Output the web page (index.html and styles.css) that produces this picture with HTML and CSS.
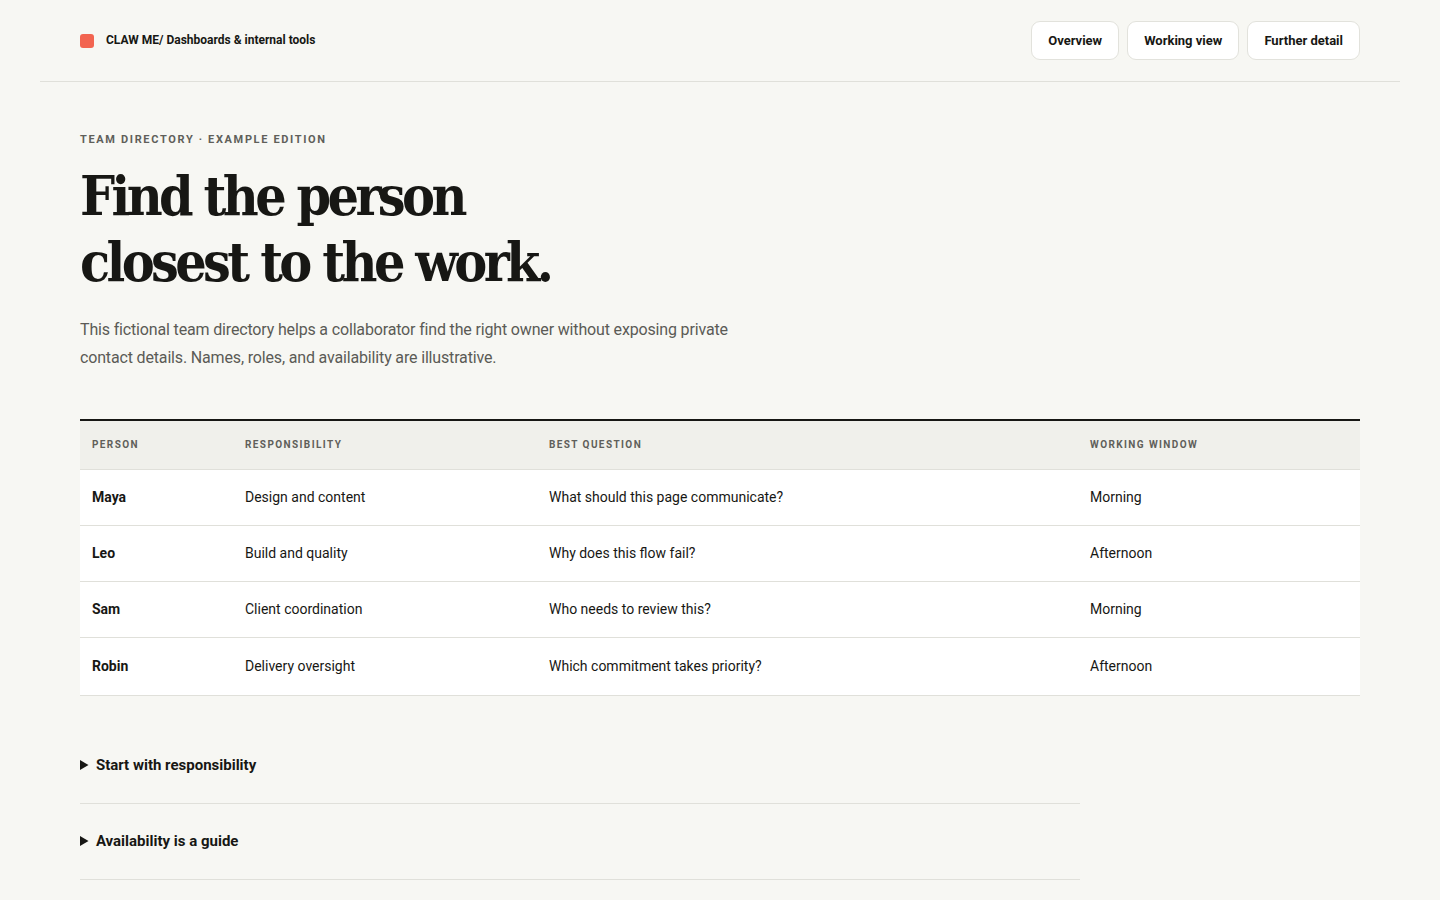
FILE: index.html
```html
<!DOCTYPE html>
<html lang="en">
<head>
	<meta charset="UTF-8">
	<meta name="viewport" content="width=device-width, initial-scale=1.0">
	<title>Team directory</title>
<link rel="stylesheet" href="styles.css">
</head>
<body>

<header class="topBar">
	<div class="brand">
		<span class="brandMark"></span>
		<span class="brandText">CLAW ME/ Dashboards &amp; internal tools</span>
	</div>
	<nav class="navBtns">
		<a class="navBtn" href="#">Overview</a>
		<a class="navBtn" href="#">Working view</a>
		<a class="navBtn" href="#">Further detail</a>
	</nav>
</header>

<main class="page">
	<p class="eyebrow">TEAM DIRECTORY · EXAMPLE EDITION</p>
	<h1 class="title">Find the person<br>closest to the work.</h1>
	<p class="intro">This fictional team directory helps a collaborator find the right owner without exposing private contact details. Names, roles, and availability are illustrative.</p>

	<table class="dirTable">
		<thead>
			<tr>
				<th class="colPerson">PERSON</th>
				<th class="colResp">RESPONSIBILITY</th>
				<th class="colQuestion">BEST QUESTION</th>
				<th class="colWindow">WORKING WINDOW</th>
			</tr>
		</thead>
		<tbody>
			<tr>
				<td class="name">Maya</td>
				<td>Design and content</td>
				<td>What should this page communicate?</td>
				<td>Morning</td>
			</tr>
			<tr>
				<td class="name">Leo</td>
				<td>Build and quality</td>
				<td>Why does this flow fail?</td>
				<td>Afternoon</td>
			</tr>
			<tr>
				<td class="name">Sam</td>
				<td>Client coordination</td>
				<td>Who needs to review this?</td>
				<td>Morning</td>
			</tr>
			<tr>
				<td class="name">Robin</td>
				<td>Delivery oversight</td>
				<td>Which commitment takes priority?</td>
				<td>Afternoon</td>
			</tr>
		</tbody>
	</table>

	<div class="notes">
		<details class="note">
			<summary>Start with responsibility</summary>
			<p>Look at what each person owns before picking a name.</p>
		</details>
		<details class="note">
			<summary>Availability is a guide</summary>
			<p>Working windows are approximate and can shift week to week.</p>
		</details>
	</div>
</main>

</body>
</html>
```

FILE: styles.css
```css
/* reset */
*{
	margin: 0;
	padding: 0;
	box-sizing: border-box;
}

body{
	background: #f7f7f3;
	color: #171714;
	font-family: Roboto, "Liberation Sans", sans-serif;
}

/* top bar */
.topBar{
	display: flex;
	align-items: center;
	justify-content: space-between;
	margin: 0 40px;
	padding: 21px 40px 21px;
	border-bottom: 1px solid #e0e0da;
}

.brand{
	display: flex;
	align-items: center;
	gap: 12px;
}

.brandMark{
	width: 14px;
	height: 14px;
	border-radius: 3px;
	background: #f26450;
}

.brandText{
	font-size: 12px;
	font-weight: 700;
	line-height: 16px;
	margin-top: -1px;
}

.navBtns{
	display: flex;
	gap: 8px;
}

.navBtn{
	display: block;
	height: 39px;
	line-height: 37px;
	padding: 0 16px;
	background: #fff;
	border: 1px solid #e2e2dc;
	border-radius: 9px;
	color: #171714;
	font-size: 13px;
	font-weight: 700;
	text-decoration: none;
}

/* intro block */
.page{
	padding: 0 80px 40px;
}

.eyebrow{
	margin-top: 51px;
	font-size: 11px;
	font-weight: 700;
	letter-spacing: 0.15em;
	color: #5f5f5a;
}

.title{
	margin-top: 17px;
	font-family: "DejaVu Serif Condensed", "DejaVu Serif", serif;
	font-stretch: condensed;
	font-size: 55px;
	line-height: 66px;
	font-weight: 700;
	letter-spacing: -0.066em;
	color: #171714;
}

.intro{
	margin-top: 21px;
	max-width: 690px;
	font-size: 16px;
	line-height: 28px;
	letter-spacing: -0.01em;
	color: #5b5b56;
}

/* table */
.dirTable{
	width: 100%;
	margin-top: 47px;
	border-collapse: collapse;
	border-top: 2px solid #171714;
	background: #fff;
}

.dirTable th{
	height: 49px;
	padding: 0 12px;
	background: #f0f0eb;
	text-align: left;
	font-size: 10px;
	font-weight: 700;
	letter-spacing: 0.14em;
	color: #5f5f5a;
	border-bottom: 1px solid #e0e0da;
}

.dirTable td{
	height: 56px;
	padding: 0 12px;
	font-size: 14px;
	color: #171714;
	border-bottom: 1px solid #e0e0da;
}

.dirTable tr:last-child td{
	height: 58px;
}

.dirTable td.name{
	font-weight: 700;
}

.colPerson{ width: 153px; }
.colResp{ width: 304px; }
.colQuestion{ width: 541px; }

/* notes */
.notes{
	margin-top: 32px;
	width: 1000px;
}

.note{
	padding: 24px 0;
	border-bottom: 1px solid #e0e0da;
}

.note summary{
	line-height: 27px;
	font-size: 15px;
	font-weight: 700;
	cursor: pointer;
}

.note p{
	margin-top: 10px;
	font-size: 14px;
	color: #5b5b56;
}
```
